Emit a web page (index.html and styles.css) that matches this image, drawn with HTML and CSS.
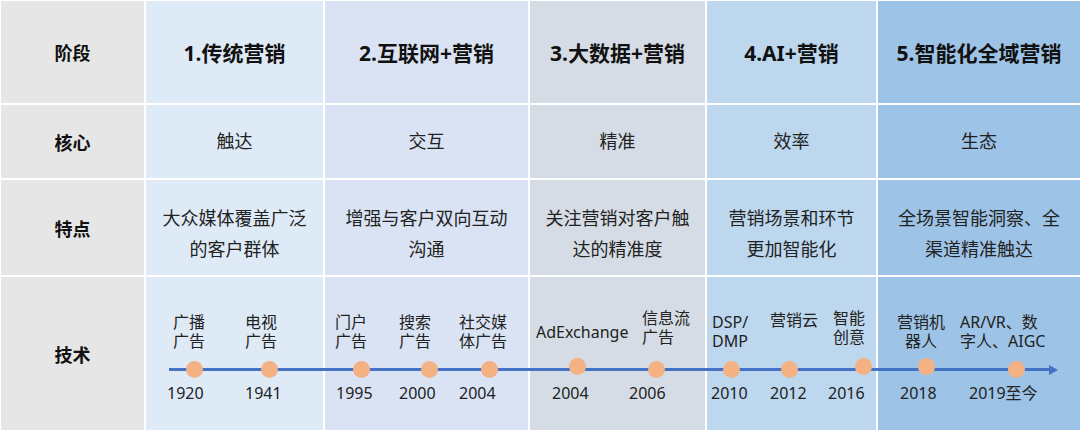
FILE: index.html
```html
<!DOCTYPE html>
<html lang="zh-CN">
<head>
<meta charset="utf-8">
<title>营销发展阶段</title>
<link rel="stylesheet" href="styles.css">
</head>
<body>
<div class="table">
  <div class="cell r1 c0 head">阶段</div>
  <div class="cell r1 c1 stage">1.传统营销</div>
  <div class="cell r1 c2 stage">2.互联网+营销</div>
  <div class="cell r1 c3 stage">3.大数据+营销</div>
  <div class="cell r1 c4 stage">4.AI+营销</div>
  <div class="cell r1 c5 stage">5.智能化全域营销</div>

  <div class="cell r2 c0 head">核心</div>
  <div class="cell r2 c1 body">触达</div>
  <div class="cell r2 c2 body">交互</div>
  <div class="cell r2 c3 body">精准</div>
  <div class="cell r2 c4 body">效率</div>
  <div class="cell r2 c5 body">生态</div>

  <div class="cell r3 c0 head">特点</div>
  <div class="cell r3 c1 body multi">大众媒体覆盖广泛<br>的客户群体</div>
  <div class="cell r3 c2 body multi">增强与客户双向互动<br>沟通</div>
  <div class="cell r3 c3 body multi">关注营销对客户触<br>达的精准度</div>
  <div class="cell r3 c4 body multi">营销场景和环节<br>更加智能化</div>
  <div class="cell r3 c5 body multi">全场景智能洞察、全<br>渠道精准触达</div>

  <div class="cell r4 c0 head">技术</div>
  <div class="cell r4 c1"></div>
  <div class="cell r4 c2"></div>
  <div class="cell r4 c3"></div>
  <div class="cell r4 c4"></div>
  <div class="cell r4 c5"></div>

  <div class="timeline">
    <div class="axis"></div>

    <div class="lbl" style="left:27px">广播<br>广告</div>
    <div class="dot" style="left:48px"></div>
    <div class="yr" style="left:21px">1920</div>

    <div class="lbl" style="left:99px">电视<br>广告</div>
    <div class="dot" style="left:123px"></div>
    <div class="yr" style="left:99px">1941</div>

    <div class="lbl" style="left:189px">门户<br>广告</div>
    <div class="dot" style="left:215px"></div>
    <div class="yr" style="left:190px">1995</div>

    <div class="lbl" style="left:253px">搜索<br>广告</div>
    <div class="dot" style="left:283px"></div>
    <div class="yr" style="left:253px">2000</div>

    <div class="lbl" style="left:313px">社交媒<br>体广告</div>
    <div class="dot" style="left:343px"></div>
    <div class="yr" style="left:313px">2004</div>

    <div class="lbl single" style="left:390px">AdExchange</div>
    <div class="dot up" style="left:431px"></div>
    <div class="yr" style="left:406px">2004</div>

    <div class="lbl high" style="left:496px">信息流<br>广告</div>
    <div class="dot" style="left:510px"></div>
    <div class="yr" style="left:483px">2006</div>

    <div class="lbl" style="left:566px">DSP/<br>DMP</div>
    <div class="dot" style="left:585px"></div>
    <div class="yr" style="left:565px">2010</div>

    <div class="lbl mid" style="left:624px">营销云</div>
    <div class="dot" style="left:643px"></div>
    <div class="yr" style="left:624px">2012</div>

    <div class="lbl high" style="left:687px">智能<br>创意</div>
    <div class="dot up" style="left:717px"></div>
    <div class="yr" style="left:682px">2016</div>

    <div class="lbl centered" style="left:751px">营销机<br>器人</div>
    <div class="dot up" style="left:780px"></div>
    <div class="yr" style="left:754px">2018</div>

    <div class="lbl" style="left:814px">AR/VR、数<br>字人、AIGC</div>
    <div class="dot" style="left:870px"></div>
    <div class="yr" style="left:823px">2019至今</div>
  </div>
</div>
</body>
</html>
```

FILE: styles.css
```css
* {
  box-sizing: border-box;
}

html, body {
  margin: 0;
  padding: 0;
  background: #ffffff;
}

body {
  width: 1080px;
  height: 432px;
  overflow: hidden;
  padding: 1px 0 0 1px;
  font-family: "Noto Sans", "Noto Sans CJK SC", sans-serif;
  color: #222222;
}

.table {
  display: grid;
  grid-template-columns: 143px 177px 203px 175px 169px 1fr;
  grid-template-rows: 102px 73px 95px 153px;
  gap: 2px;
}

.cell {
  display: flex;
  align-items: center;
  justify-content: center;
  text-align: center;
}

.r1 { grid-row: 1; }
.r2 { grid-row: 2; }
.r3 { grid-row: 3; }
.r4 { grid-row: 4; }

.c0 { grid-column: 1; background: #e6e6e6; }
.c1 { grid-column: 2; background: #deebf7; }
.c2 { grid-column: 3; background: #dae3f3; }
.c3 { grid-column: 4; background: #d6dce5; }
.c4 { grid-column: 5; background: #bdd7ee; }
.c5 { grid-column: 6; background: #9dc3e6; }

.head {
  font-size: 18px;
  font-weight: 700;
  color: #111111;
}

.stage {
  font-size: 21px;
  font-weight: 700;
  color: #111111;
}

.body {
  font-size: 18px;
  line-height: 31px;
}

.multi {
  padding-top: 12px;
}

.timeline {
  grid-row: 4;
  grid-column: 2 / 7;
  position: relative;
  font-size: 16px;
  line-height: 19px;
  color: #222222;
}

.axis {
  position: absolute;
  left: 23px;
  top: 91px;
  width: 881px;
  height: 3px;
  background: #4472c4;
}

.axis::after {
  content: "";
  position: absolute;
  right: -8px;
  top: -3.5px;
  border-left: 9px solid #4472c4;
  border-top: 5px solid transparent;
  border-bottom: 5px solid transparent;
}

.dot {
  position: absolute;
  top: 84px;
  width: 17px;
  height: 17px;
  margin-left: -8.5px;
  border-radius: 50%;
  background: #f4b183;
}

.dot.up {
  top: 81px;
}

.lbl {
  position: absolute;
  top: 36px;
  white-space: nowrap;
  text-align: left;
}

.lbl.high {
  top: 32px;
}

.lbl.mid {
  top: 34px;
}

.lbl.single {
  top: 46px;
}

.lbl.centered {
  text-align: center;
}

.yr {
  position: absolute;
  top: 107px;
  white-space: nowrap;
}
```
